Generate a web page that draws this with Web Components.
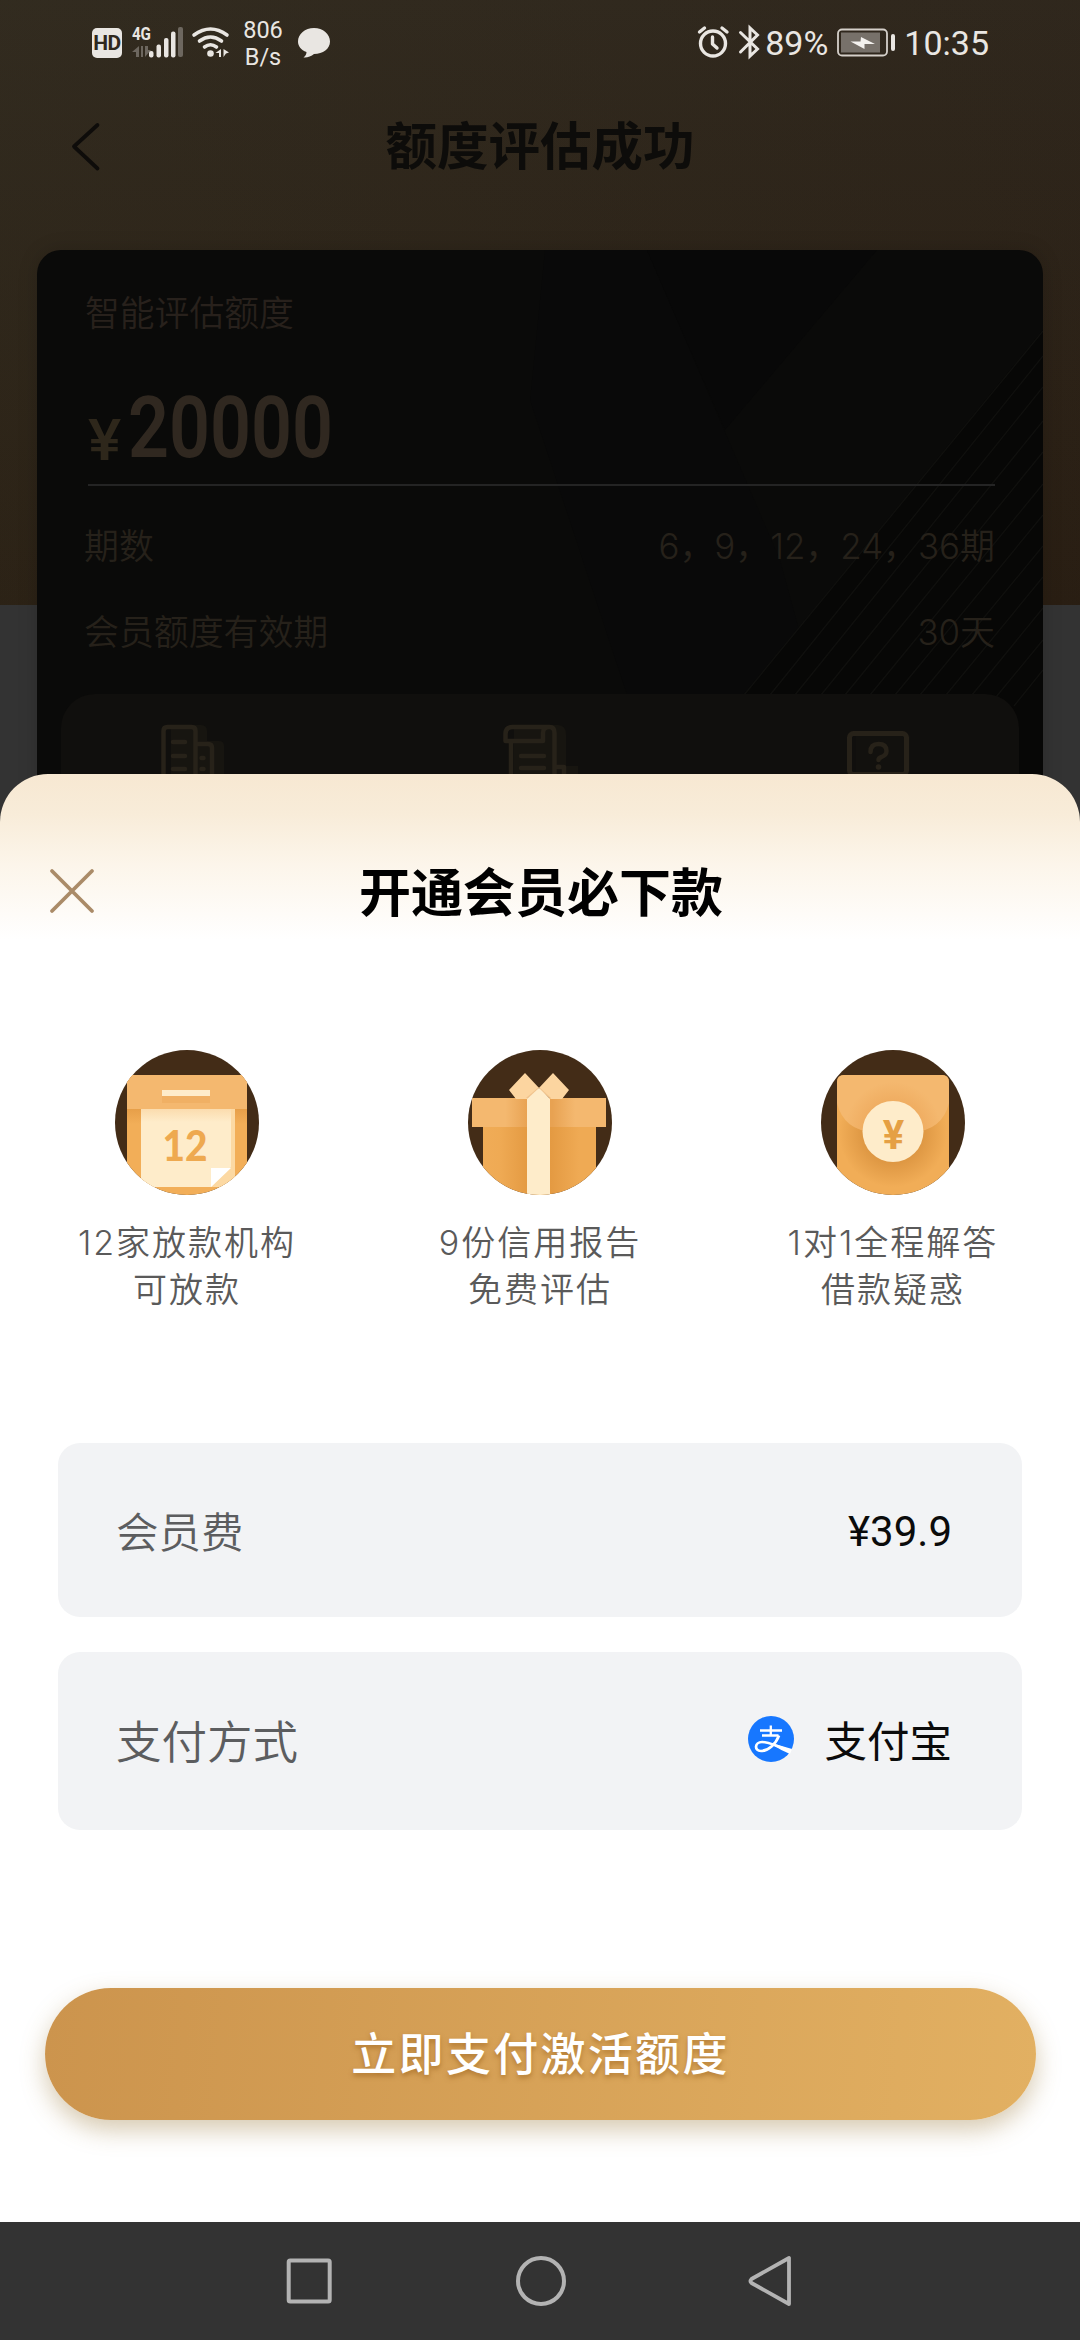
<!DOCTYPE html>
<html lang="zh-CN">
<head>
<meta charset="utf-8">
<title>额度评估成功</title>
<style>
html,body{margin:0;padding:0}
body{width:1080px;height:2340px;overflow:hidden;background:#333;font-family:Roboto,"Noto Sans CJK SC",sans-serif}
</style>
</head>
<body>
<app-screen></app-screen>
<script>
const define=(name,html)=>{
  const t=document.createElement('template');t.innerHTML=html;
  customElements.define(name,class extends HTMLElement{
    constructor(){super();this.attachShadow({mode:'open'}).append(t.content.cloneNode(true));}
  });
};

define('status-bar',`
<style>
:host{display:flex;justify-content:space-between;height:90px;padding:0 92px;box-sizing:border-box;color:#e9e6e2}
.l,.r{display:flex;align-items:flex-start}
svg{display:block;flex:none}
.net{width:50px;margin-left:7px;padding-top:17px;font-size:23.500px;line-height:27px;text-align:center}
.b{margin-left:9px}
.t{font-size:34px;line-height:40px;padding-top:23px;white-space:nowrap}
.hd{font:700 21px/30px Roboto,sans-serif;color:#2f281e;background:#e9e6e2;width:30px;height:30px;border-radius:5px;margin-top:28px;text-align:center;letter-spacing:-.6px}
.sig{margin-left:10px;width:54px}
.g{display:block;font:700 19px/18px Roboto,sans-serif;transform:scaleX(.8);transform-origin:0 0;margin-top:25px;height:0;letter-spacing:-.4px}
</style>
<div class="l">
<div class="hd">HD</div>
<div class="sig"><span class="g">4G</span>
<svg width="54" height="60" viewBox="132 25 54 60"><g fill="#6d675f"><path d="M139 46v11h-3v-5h-4zM141 57V46h2v11zM145 46l3 0 0 4 3 0-6 7z"/><rect x="178" y="27" width="5" height="30" rx="2"/></g><g fill="#e9e6e2"><rect x="149" y="51" width="4.500" height="6.500" rx="2"/><rect x="156.500" y="44.500" width="4.500" height="13" rx="2"/><rect x="164" y="38" width="4.500" height="19.500" rx="2"/><rect x="171" y="31.500" width="4.500" height="26" rx="2"/></g></svg></div>
<svg style="margin-left:5px" width="40" height="64" viewBox="190 0 40 64"><g fill="none" stroke="#e9e6e2" stroke-width="3.600" stroke-linecap="round"><path d="M193 35q16.500-12 33 0M198.500 41q11-8 22 0M203.500 47q6-4.500 12 0"/></g><circle cx="209.500" cy="53.500" r="3.300" fill="#e9e6e2"/><path d="M220 49v8h-2v-4h-3.500zM222.500 57v-8l5.500 3.500-3 1z" fill="#e9e6e2"/></svg>
<div class="net">806<br>B/s</div>
<svg class="b" width="34" height="64" viewBox="296 0 34 64"><path d="M313 28c9 0 16 6 16 13.500S322 54 313 54c-3 2.500-7 4-10.500 3.500 2-1.500 3-3.500 3-5.500C300 50 297 46 297 41.500 297 34 304 28 313 28z" fill="#e9e6e2"/></svg>
</div>
<div class="r">
<svg width="66" height="64" viewBox="697 0 66 64"><g fill="none" stroke="#e9e6e2" stroke-width="3.400" stroke-linecap="round" stroke-linejoin="round"><circle cx="713" cy="43.500" r="12.500"/><path d="M699.500 32l5-4M727 32l-5-4M712.500 37v7l4.500 4"/><path stroke-width="3" d="M740.500 32.500l17 16.500-7.500 7V28l7.500 7-17 17" stroke-linejoin="miter"/></g></svg>
<span class="t" style="margin-left:2px">89%</span>
<svg style="margin-left:9px" width="60" height="64" viewBox="837 0 60 64"><rect x="838" y="29.500" width="49" height="26" rx="4" fill="none" stroke="#d5d0ca" stroke-width="1.800"/><rect x="841" y="32.500" width="39" height="20" fill="#77716a"/><rect x="891" y="34" width="4" height="17" rx="2" fill="#e9e6e2"/><path d="M850.500 41.500h10l.5-4.500 14 7h-10.500v5z" fill="#f4f2ef"/></svg>
<span class="t" style="margin-left:7px;margin-right:-1px">10:35</span>
</div>`);

define('top-header',`
<style>
:host{display:grid;grid-template-columns:130px 1fr 130px;align-items:center;height:160px;color:#0d0c0a;box-sizing:border-box}
svg{display:block;margin-left:70px;margin-top:-47px}
h1{margin:-44px 0 0;font-size:51.500px;line-height:70px;font-weight:700;text-align:center}
</style>
<svg width="32" height="52" viewBox="70 121 32 52"><path d="M97.500 125L74 146.500l23.500 22" fill="none" stroke="#0e0c0a" stroke-width="3.800" stroke-linecap="round" stroke-linejoin="round"/></svg>
<h1><slot></slot></h1><span></span>`);

define('info-row',`
<style>
:host{display:flex;justify-content:space-between;align-items:center;height:86px;padding:0 48px 0 47px;color:#26211a;font:350 34.900px/50px Inter,"Noto Sans CJK SC",sans-serif}
</style><slot name="label"></slot><slot></slot>`);

define('credit-card',`
<style>
:host{display:block;position:relative;width:1006px;height:760px;margin:0 auto;border-radius:24px 24px 0 0;background:#0a0a09;overflow:hidden;box-shadow:0 0 20px rgba(0,0,0,.16)}
.bg{position:absolute;inset:0}
.in{position:relative}
.label{padding:38px 0 0 48px;font-size:34.800px;line-height:52px;font-weight:350;color:#28211c}
.amt{display:flex;height:144px;padding:33px 0 0 51px;box-sizing:border-box;color:#302820}
.yen{font:500 57px/110px Roboto,sans-serif;width:40px;padding-top:13px;color:#2e271b;transform:scaleX(1.1);transform-origin:0 50%}
.num{font:600 86px/110px Roboto,sans-serif;display:inline-block;transform:scaleX(.835);transform-origin:0 50%;white-space:nowrap}
.line{height:1.500px;background:#242424;margin:0 48px 0 51px}
.rows{padding-top:17px}
.panel{display:flex;margin:19px 24px 0;height:320px;border-radius:34px;background:#100f0d;padding:28px 0 0 99px;box-sizing:border-box}
.panel svg{display:block;flex:none}
</style>
<svg class="bg" width="1006" height="530" viewBox="37 250 1006 530"><path d="M545 250h102L780 560l60 220H655L530 400z" fill="#090909"/><path d="M647 250h230L725 430z" fill="#080808"/><path d="M1043 330L740 700v80h303z" fill="#070706"/><g stroke="#10100e" stroke-width="1.300"><path d="M1043 331L744 695M1043 356L770 695M1043 387L795 695M1043 421L821 695M1043 452L845 695M1043 484L870 695M1043 515L895 695M1043 546L920 695M1043 577L946 695M1043 608L972 695M1043 640L996 697M1043 670L1014 706"/></g></svg>
<div class="in">
<div class="label">智能评估额度</div>
<div class="amt"><span class="yen">¥</span><span class="num">20000</span></div>
<div class="line"></div>
<div class="rows"><info-row><span slot="label">期数</span>6，9，12，24，36期</info-row><info-row><span slot="label">会员额度有效期</span>30天</info-row></div>
<div class="panel">
<svg width="64" height="60" viewBox="160 721 64 60"><path d="M171 724h30q6 0 6 6v10h12q5 0 5 5v40h-53z" fill="#171510"/><g fill="none" stroke="#272219" stroke-width="4.500" stroke-linecap="round"><path d="M163.500 785v-55q0-4 4-4h24q4 0 4 4v55M196 743h12q4 0 4 4v38M173 741h12M173 755h12M173 768h12M201.500 757h2M201.500 768h2"/></g></svg>
<svg style="margin-left:278px" width="76" height="60" viewBox="502 721 76 60"><path d="M514 724h44q8 0 8 10v31h12v20h-64z" fill="#171510"/><g fill="none" stroke="#272219" stroke-width="4.500" stroke-linecap="round" stroke-linejoin="round"><path d="M511 742v43M543 740h-37.500v-7q0-7 7-7h37q5 0 5 6v53M543 740v-8q0-6 6-6M555 766h9v18M521 755h23M521 767h23"/></g></svg>
<svg style="margin-left:268px" width="64" height="60" viewBox="846 721 64 60"><rect x="856" y="735" width="54" height="40" fill="#12110e"/><rect x="849.500" y="732.500" width="57" height="41" rx="4" fill="none" stroke="#272219" stroke-width="5"/><path d="M870.500 751q0-8 8-8t8 7q0 4-5 6-3 1-3 3" fill="none" stroke="#272219" stroke-width="4.500" stroke-linecap="round"/><circle cx="878.500" cy="766" r="2.800" fill="#272219"/></svg>
</div></div>`);

define('perk-item',`
<style>
:host{display:flex;flex-direction:column;align-items:center;color:#5a5a5a}
p{margin:25px 0 0;font:350 34px/46.500px Inter,"Noto Sans CJK SC",sans-serif;letter-spacing:2px;text-align:center;white-space:nowrap}
</style><slot name="icon"></slot><p><slot></slot></p>`);

define('pay-row',`
<style>
:host{display:flex;align-items:center;justify-content:space-between;margin:0 58px;padding:0 70px 0 58px;background:#f2f3f5;border-radius:22px;box-sizing:border-box;font-size:42.500px;line-height:60px;color:#0b0b0b}
.l{color:#5c5d5f;padding-top:7px;font-weight:350}
.v{display:flex;align-items:center;padding-top:4px}
</style><span class="l"><slot name="label"></slot></span><span class="v"><slot></slot></span>`);

define('pay-button',`
<style>
:host{display:flex;align-items:center;justify-content:center;margin:0 44px 0 45px;padding-top:3px;box-sizing:border-box;height:132px;border-radius:66px;background:linear-gradient(95deg,#cc944d,#e2b062);box-shadow:0 10px 24px rgba(150,115,50,.38);color:#fff;font:500 45px/60px Roboto,"Noto Sans CJK SC",sans-serif;letter-spacing:2.300px;text-shadow:0 3px 5px rgba(145,90,20,.55)}
</style><slot></slot>`);

define('member-sheet',`
<style>
:host{display:block;background:linear-gradient(#f7e8d2 0,#f8ecd9 40px,#fcf5ea 90px,#fff 166px);border-radius:48px 48px 0 0;overflow:hidden}
header{display:grid;grid-template-columns:130px 1fr 130px;align-items:center;height:236px}
header svg{display:block;margin:-3px 0 0 48px}
h2{margin:5px 0 0;font-size:52px;line-height:70px;font-weight:700;color:#000;text-align:center;padding-left:2px}
.perks{display:grid;grid-template-columns:repeat(3,353px);justify-content:center;height:433px;padding-top:40px;box-sizing:border-box}
.perks svg{display:block}
.cards{display:flex;flex-direction:column;gap:35px;padding-bottom:158px}
</style>
<header><svg width="48" height="48" viewBox="0 0 48 48"><path d="M4 4l40 40M44 4L4 44" stroke="#aa8b68" stroke-width="3.800" stroke-linecap="round"/></svg><h2>开通会员必下款</h2><span></span></header>
<div class="perks">
<perk-item><svg slot="icon" width="144" height="145" viewBox="0 0 144 145"><defs><clipPath id="c"><ellipse cx="72" cy="72.500" rx="72" ry="72.500"/></clipPath><linearGradient id="s" x2="0" y2="1"><stop stop-color="#e69e48"/><stop offset="1" stop-color="#f2ae58"/></linearGradient><linearGradient id="p" x2="0" y2="1"><stop stop-color="#fbdcae"/><stop offset="1" stop-color="#feecca"/></linearGradient></defs><g clip-path="url(#c)"><path fill="#432c17" d="M0 0h144v145H0z"/><path fill="#f2ae58" d="M12 25h120v120H12z"/><path fill="url(#s)" d="M12 58h120v16H12z"/><path fill="#f4b86f" d="M6 25h126v34H12V32H6z"/><rect x="47" y="43" width="48" height="10" fill="#edaa5d" opacity=".6"/><path fill="#feecca" d="M47 40h48v6H47z"/><path fill="#fcd9a3" d="M26 59h94v78H26z"/><path fill="#feecca" d="M26 59h90v58l-20 20H26z"/><path fill="url(#p)" d="M26 59h90v13H26z"/><path fill="#fff" d="M96 118h20l-20 19z"/><text x="70" y="111" font-family="Lato,sans-serif" font-weight="900" font-size="42" text-anchor="middle" fill="#eea950" textLength="45" lengthAdjust="spacingAndGlyphs">12</text></g></svg>12家放款机构<br>可放款</perk-item>
<perk-item><svg slot="icon" width="144" height="145" viewBox="0 0 144 145"><defs><clipPath id="d"><ellipse cx="72" cy="72.500" rx="72" ry="72.500"/></clipPath><linearGradient id="a"><stop stop-color="#f4b86f"/><stop offset=".25" stop-color="#f4b86f"/><stop offset=".42" stop-color="#e8a252"/><stop offset=".6" stop-color="#e8a252"/><stop offset=".77" stop-color="#f4b86f"/></linearGradient><linearGradient id="e"><stop stop-color="#f0ac57"/><stop offset=".15" stop-color="#efaa54"/><stop offset=".4" stop-color="#e49a42"/><stop offset=".6" stop-color="#e49a42"/><stop offset=".85" stop-color="#efaa54"/></linearGradient></defs><g clip-path="url(#d)"><path fill="#432c17" d="M0 0h144v145H0z"/><path fill="url(#e)" d="M15 77h113v70H15z"/><path fill="url(#a)" d="M4 48h134v29H4z"/><path fill="#fcd5a0" d="M41 40l16-17 15 16-13 10H48zM101 40L85 23 70 39l13 10h11z"/><path fill="#e7b67e" d="M58 48l13-11 12 11z" opacity=".6"/><path fill="#feecca" d="M59 145V49l12-11 11 11v96z"/></g></svg>9份信用报告<br>免费评估</perk-item>
<perk-item><svg slot="icon" width="144" height="145" viewBox="0 0 144 145"><defs><clipPath id="f"><ellipse cx="72" cy="72.500" rx="72" ry="72.500"/></clipPath><radialGradient id="g" cx="72" cy="83" r="60" gradientUnits="userSpaceOnUse"><stop offset=".45" stop-color="#dc9541"/><stop offset=".9" stop-color="#f1ad57"/></radialGradient><radialGradient id="h" cx="72" cy="80" r="60" gradientUnits="userSpaceOnUse"><stop offset=".45" stop-color="#efac60"/><stop offset=".8" stop-color="#f4b86f"/></radialGradient></defs><g clip-path="url(#f)"><path fill="#432c17" d="M0 0h144v145H0z"/><rect x="16" y="25" width="112" height="130" rx="7" fill="url(#g)"/><path fill="url(#h)" d="M16 32q0-7 7-7h98q7 0 7 7v21q-7 28-37 29H53Q23 81 16 53z"/><circle cx="72" cy="81.500" r="30.500" fill="#feecca"/><text x="72.500" y="99" font-family="Roboto,sans-serif" font-weight="700" font-size="40" text-anchor="middle" fill="#e5a044">¥</text></g></svg>1对1全程解答<br>借款疑惑</perk-item>
</div>
<div class="cards">
<pay-row style="height:174px"><span slot="label">会员费</span><span style="font-size:42px">¥39.9</span></pay-row>
<pay-row style="height:178px"><span slot="label" style="font-size:45.500px">支付方式</span><svg style="display:block;margin-right:30px;margin-top:-8px" width="46" height="46" viewBox="0 0 46 46"><circle cx="23" cy="23" r="23" fill="#1777ff"/><g fill="none" stroke="#fff"><path stroke-width="2.300" d="M12 14.500h22M14 19.500h16.500M22.800 9.500v10"/><path stroke-width="2.700" d="M31 19.500C28 28 20 35 13 35c-7 0-6.500-9 1-9 9 0 17 6 29 9"/></g><path d="M27 28l17 5-2 5q-8-3-17-9z" fill="#fff"/></svg><span>支付宝</span></pay-row>
</div>
<pay-button>立即支付激活额度</pay-button>`);

define('nav-bar',`
<style>
:host{display:flex;height:118px;background:#333;align-items:center;justify-content:center;gap:182px}
svg{display:block}
</style>
<svg width="48" height="52" viewBox="286 2255 48 52"><rect x="288.700" y="2260.500" width="41" height="41" rx="1.500" fill="none" stroke="#b3b3b3" stroke-width="4"/></svg>
<svg width="50" height="52" viewBox="515 2255 50 52"><circle cx="540" cy="2281" r="23" fill="none" stroke="#b3b3b3" stroke-width="4"/></svg>
<svg width="46" height="52" viewBox="747 2255 46 52"><path d="M788 2258v46l-37.500-21q-2-2 0-4z" fill="none" stroke="#b3b3b3" stroke-width="3.800" stroke-linejoin="round"/></svg>`);

define('app-screen',`
<style>
:host{display:flex;flex-direction:column;position:relative;width:1080px;height:2340px}
.page{height:2222px;overflow:hidden;background:linear-gradient(100deg,rgba(60,55,34,.16),rgba(40,20,8,.1)) 0 0/100% 605px no-repeat,linear-gradient(#30291f,#291f14) 0 0/100% 605px no-repeat,#333}
member-sheet{position:absolute;left:0;right:0;top:774px;height:1448px}
</style>
<div class="page"><status-bar></status-bar><top-header>额度评估成功</top-header><credit-card></credit-card></div>
<member-sheet></member-sheet>
<nav-bar></nav-bar>`);
</script>
</body>
</html>
